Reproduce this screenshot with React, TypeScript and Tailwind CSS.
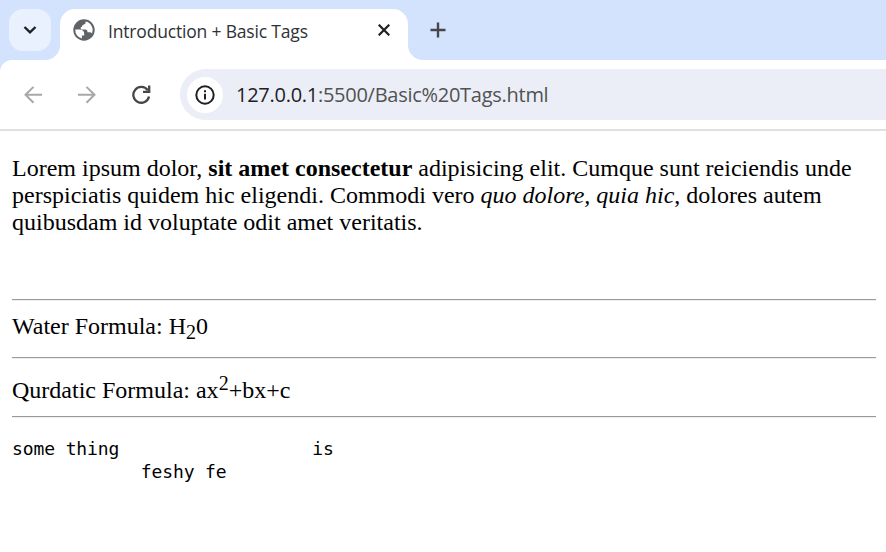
import React from 'react';

const serif = "font-['Liberation_Serif',serif]";

function TabStrip() {
  return (
    <div className="flex h-[60px] items-start bg-[#d3e3fd] pl-[9px] pt-[9px]">
      <button className="flex h-[42px] w-[42px] items-center justify-center rounded-[14px] bg-[#e9f1fe]">
        <svg width="14" height="10" viewBox="0 0 14 10" fill="none" stroke="#1f2023" strokeWidth="2.4">
          <path d="M1.5 2 L7 7.3 L12.5 2" />
        </svg>
      </button>
      <div className="relative ml-[9px] flex h-[51px] w-[348px] items-start rounded-t-[15px] bg-white pl-[13px]">
        <span className="absolute -left-[15px] bottom-0 h-[15px] w-[15px] bg-[radial-gradient(circle_at_0_0,transparent_14.5px,#ffffff_15.5px)]" />
        <span className="absolute -right-[15px] bottom-0 h-[15px] w-[15px] bg-[radial-gradient(circle_at_100%_0,transparent_14.5px,#ffffff_15.5px)]" />
        <svg className="mt-[10px]" width="22" height="22" viewBox="0 0 22 22">
          <circle cx="11" cy="11" r="10.7" fill="#5f6368" />
          <path
            d="M12.6 2.4 V3.6 Q12.6 5.2 11 5.4 Q9.4 5.6 9.3 6.8 Q9.2 8 7.8 8.3 V10.6 H12.6 Q14.6 10.8 14.6 13.2 H16.9 Q18.3 13.3 18.9 14.4 A8.7 8.7 0 0 0 12.6 2.4 Z"
            fill="#fff"
          />
          <path d="M2.3 10.4 H6.8 Q11.2 10.7 11.2 15 V16.4 H8.9 V19.5 A8.8 8.8 0 0 1 2.3 10.4 Z" fill="#fff" />
        </svg>
        <span className="ml-[13px] mt-[9px] w-[270px] whitespace-nowrap font-['Open_Sans',sans-serif] text-[17.5px] leading-[26px] tracking-[-0.18px] text-[#303134]">
          Introduction + Basic Tags
        </span>
        <svg className="mt-[15px]" width="12" height="12" viewBox="0 0 12 12" stroke="#1f2023" strokeWidth="2.2">
          <path d="M0.7 0.7 L11.3 11.3 M11.3 0.7 L0.7 11.3" />
        </svg>
      </div>
      <svg className="ml-[22px] mt-[13px]" width="16" height="16" viewBox="0 0 16 16" stroke="#45474a" strokeWidth="2.4">
        <path d="M8 0.5 V15.5 M0.5 8 H15.5" />
      </svg>
    </div>
  );
}

function Toolbar() {
  return (
    <div className="h-[71px] bg-[#d3e3fd]">
      <div className="flex h-full items-start rounded-tl-[12px] border-b-2 border-[#e0e0e0] bg-white pl-[24px] pt-[9px]">
        <svg className="mt-[17px]" width="18" height="18" viewBox="0 0 18 18" fill="none" stroke="#a8a8a9" strokeWidth="2">
          <path d="M18 8.8 H1.5 M9.5 0.9 L1.5 8.8 L9.5 16.7" />
        </svg>
        <svg className="ml-[36px] mt-[17px]" width="18" height="18" viewBox="0 0 18 18" fill="none" stroke="#a8a8a9" strokeWidth="2">
          <path d="M0 8.8 H16.5 M8.5 0.9 L16.5 8.8 L8.5 16.7" />
        </svg>
        <svg className="ml-[36px] mt-[16px]" width="19" height="19" viewBox="0 0 19 19" fill="none" stroke="#45474a" strokeWidth="2.3">
          <path d="M15.8 5.4 A7.9 7.9 0 1 0 17 11.4" />
          <path d="M17.2 0.5 V6.9 H11" />
        </svg>
        <div className="ml-[29px] flex h-[51px] flex-1 items-center rounded-l-full bg-[#ebeef7] pl-[7px]">
          <div className="flex h-[36px] w-[36px] items-center justify-center rounded-full bg-white">
            <svg width="20" height="20" viewBox="0 0 20 20" fill="none" stroke="#1f2023" strokeWidth="2">
              <circle cx="10" cy="10" r="8.7" />
              <path d="M10 8.8 V14.6 M10 5.3 V7.3" />
            </svg>
          </div>
          <span className="ml-[13px] whitespace-nowrap font-['Open_Sans',sans-serif] text-[20px] leading-[28px] tracking-[-0.27px] text-[#525252]">
            <span className="text-[#1f2023]">127.0.0.1</span>:5500/Basic%20Tags.html
          </span>
        </div>
      </div>
    </div>
  );
}

function Rule() {
  return <hr className="h-[2px] border-0 border-t border-[#9a9a9a] bg-[#eeeeee]" />;
}

export default function App() {
  return (
    <div className="h-[552px] w-[886px] overflow-hidden bg-white">
      <TabStrip />
      <Toolbar />
      <main className={`${serif} pl-[12px] pr-[10px] pt-[24px] text-[24px] leading-[27px] text-black`}>
        <p className="h-[144px] whitespace-nowrap">
          Lorem ipsum dolor, <b className="font-bold">sit amet consectetur</b> adipisicing elit. Cumque sunt reiciendis unde
          <br />
          perspiciatis quidem hic eligendi. Commodi vero <i>quo dolore, quia hic</i>, dolores autem
          <br />
          quibusdam id voluptate odit amet veritatis.
        </p>
        <Rule />
        <p className="h-[56px] pt-[12px]">
          Water Formula: H<span className="relative top-[5px] text-[20px] leading-none">2</span>0
        </p>
        <Rule />
        <p className="h-[57px] pt-[18px]">
          Qurdatic Formula: ax<span className="relative -top-[8px] text-[20px] leading-none">2</span>+bx+c
        </p>
        <Rule />
        <pre className="pt-[19px] font-['DejaVu_Sans_Mono',monospace] text-[18px] leading-[23px] tracking-[-0.11px]">
          {'some thing                  is\n            feshy fe'}
        </pre>
      </main>
    </div>
  );
}
